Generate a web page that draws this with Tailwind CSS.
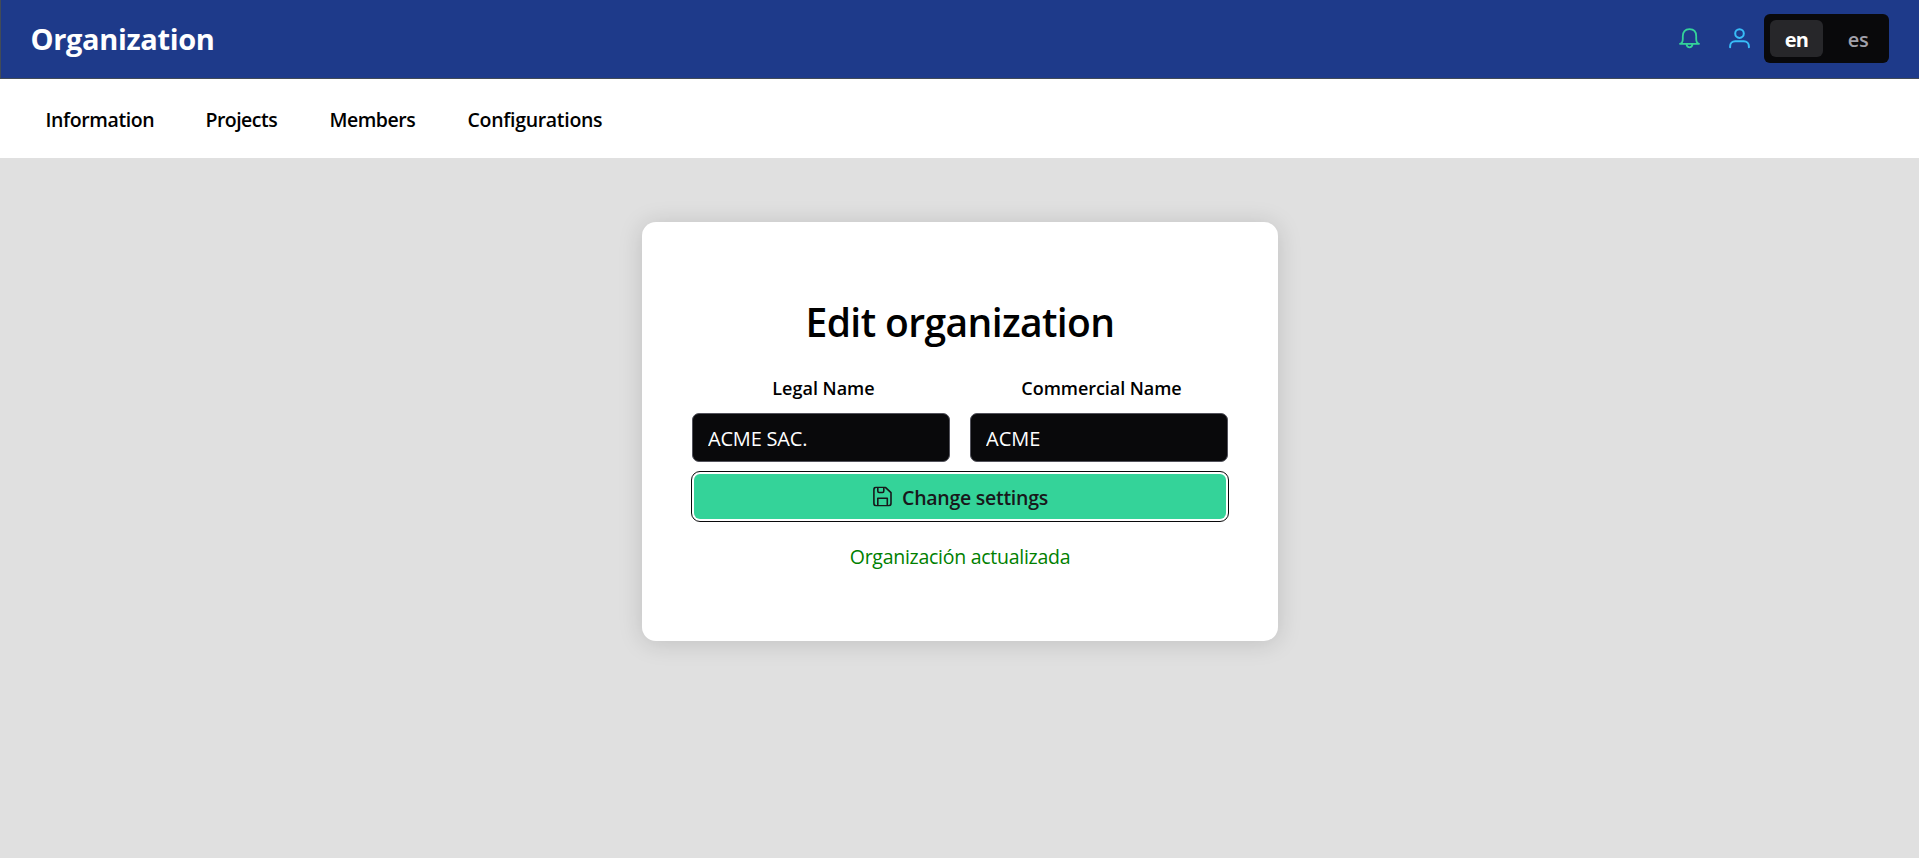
<!DOCTYPE html>
<html lang="en">
<head>
<meta charset="utf-8">
<title>Organization</title>
<script src="https://cdn.jsdelivr.net/npm/@tailwindcss/browser@4"></script>
</head>
<body class="flex h-screen flex-col overflow-hidden bg-[#e0e0e0] font-['Open_Sans',sans-serif] text-[19.5px] text-black">
  <header class="flex h-[79px] shrink-0 items-center justify-between border-b border-l border-[#424b57] bg-[#1e3a8a] pr-[30px] pl-[29.5px]">
    <h1 class="text-[29px] leading-10 font-bold tracking-[-0.34px] text-white">Organization</h1>
    <div class="flex items-center">
      <svg class="mr-[29px] size-[21px] -translate-y-px" viewBox="0 0 21 21" fill="none" stroke="#34d399" stroke-width="1.8" stroke-linecap="round" stroke-linejoin="round">
        <path d="M1 15.8H20M1 15.8C3.2 15.2 3.8 13.5 3.8 11V8.2C3.8 3.7 6 1.2 10.5 1.2S17.2 3.7 17.2 8.2V11C17.2 13.5 17.8 15.2 20 15.8M7.4 16.2C7.8 18.3 9 19.4 10.5 19.4S13.2 18.3 13.6 16.2"/>
      </svg>
      <svg class="mr-[14px] size-[21px] -translate-y-px" viewBox="0 0 21 21" fill="none" stroke="#38bdf8" stroke-width="2" stroke-linecap="round">
        <circle cx="10.5" cy="5.6" r="4.3"/>
        <path d="M1.1 19.2V18.4C1.1 15.4 3.2 13.3 6.2 13.3H14.8C17.8 13.3 19.9 15.4 19.9 18.4V19.2"/>
      </svg>
      <div class="mb-px flex h-[49px] w-[125px] items-center rounded-[6px] bg-[#09090b] p-[6px] font-semibold">
        <span class="flex h-[37px] w-[53px] items-center justify-center rounded-[6px] bg-[#27272a] pt-[3px] text-[20px] font-bold tracking-[-0.7px] text-white">en</span>
        <span class="flex h-[37px] flex-1 items-center justify-center pt-[3px] pl-[10px] text-[20px] tracking-[-0.3px] text-[#a1a1aa]">es</span>
      </div>
    </div>
  </header>
  <nav class="flex h-[79px] shrink-0 items-center bg-white pt-[3px] pl-[45.5px] font-semibold">
    <a class="w-[160px] tracking-[-0.39px]">Information</a>
    <a class="w-[124px] tracking-[-0.53px]">Projects</a>
    <a class="w-[138px] tracking-[-0.48px]">Members</a>
    <a class="tracking-[-0.3px]">Configurations</a>
  </nav>
  <main class="flex justify-center pt-16 pl-px">
    <section class="h-[419px] w-[636px] rounded-[14px] bg-white px-[49px] pt-[76px] text-center shadow-[0_2px_24px_rgba(0,0,0,0.15)]">
      <h2 class="text-[39px] leading-[48px] font-semibold tracking-[-0.6px]">Edit organization</h2>
      <div class="mt-7 grid grid-cols-2 gap-5 px-px">
        <label class="flex flex-col gap-[11px]">
          <span class="pl-[5px] text-[18px] leading-7 font-semibold">Legal Name</span>
          <input class="h-[49px] w-full rounded-[7px] border border-[#52525b] bg-[#09090b] px-[15px] pt-px text-[20px] tracking-[-0.2px] text-white" value="ACME SAC.">
        </label>
        <label class="flex flex-col gap-[11px]">
          <span class="pl-[5px] text-[18px] leading-7 font-semibold tracking-[-0.05px]">Commercial Name</span>
          <input class="h-[49px] w-full rounded-[7px] border border-[#52525b] bg-[#09090b] px-[15px] pt-px text-[20px] text-white" value="ACME">
        </label>
      </div>
      <div class="mt-[9px] h-[51px] rounded-[9px] border border-[#09090b] p-[2px]">
        <button class="flex h-full w-full items-center justify-center rounded-[6px] bg-[#34d399] font-semibold tracking-[-0.27px] text-[#18181b]">
          <svg class="mr-[10px] ml-px h-5 w-[19px] -translate-y-[0.5px]" viewBox="0 0 19 20" fill="none" stroke="currentColor" stroke-width="1.6" stroke-linejoin="round">
            <path d="M3.2 .8H12.4L18 6.2V16.8Q18 19.2 15.6 19.2H3.2Q.9 19.2 .9 16.8V3.2Q.9 .8 3.2 .8ZM4.8 .8V4.6Q4.8 6 6.1 6H9.5Q10.8 6 10.8 4.6V.8M4.8 19.2V11.7H14.3V19.2"/>
          </svg>
          <span class="pt-[3px]">Change settings</span>
        </button>
      </div>
      <p class="mt-5 leading-[30px] tracking-[-0.27px] text-[#008000]">Organización actualizada</p>
    </section>
  </main>
</body>
</html>
